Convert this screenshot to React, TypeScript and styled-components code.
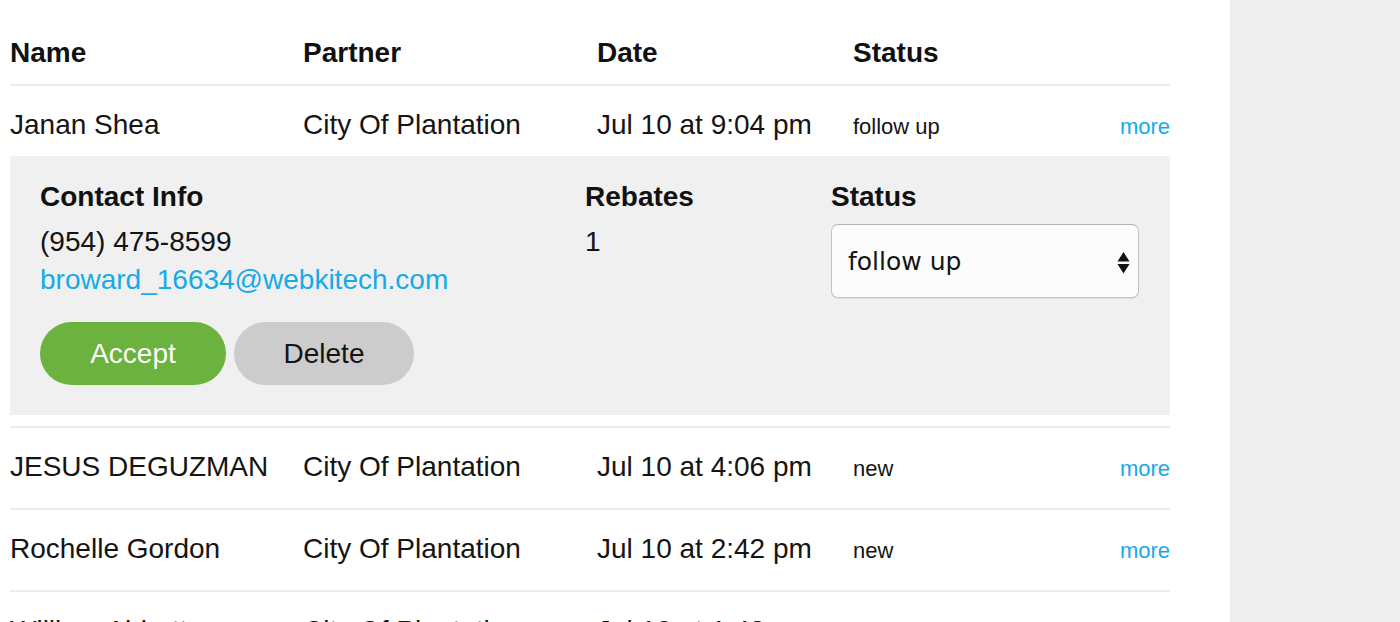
import React from 'react'
import styled, { createGlobalStyle } from 'styled-components'

const GlobalStyle = createGlobalStyle`
  html, body {
    margin: 0;
    padding: 0;
    background: #ffffff;
    overflow: hidden;
  }
  body {
    font-family: "Liberation Sans", Arial, Helvetica, sans-serif;
    color: #141414;
  }
`

const Page = styled.div`
  display: flex;
  height: 100vh;
  overflow: hidden;
`

const Main = styled.div`
  width: 1160px;
  padding: 0 60px 0 10px;
  flex-shrink: 0;
`

const Sidebar = styled.aside`
  flex: 1;
  background: #eeeeee;
`

const columns = '293px 294px 256px 1fr auto'

const HeaderRow = styled.div`
  display: grid;
  grid-template-columns: ${columns};
  align-items: center;
  padding: 37px 0 15px;
  line-height: 32px;
  border-bottom: 2px solid #ededed;
  font-size: 28px;
  font-weight: 700;
  color: #111111;
`

const Row = styled.div<{ $open?: boolean }>`
  display: grid;
  grid-template-columns: ${columns};
  align-items: center;
  height: ${(p) => (p.$open ? '70px' : '82px')};
  padding: ${(p) => (p.$open ? '8px 0 0' : '0 0 3px')};
  box-sizing: border-box;
  border-bottom: ${(p) => (p.$open ? 'none' : '2px solid #ededed')};
  font-size: 28px;
  line-height: 32px;
  white-space: nowrap;
`

const Cell = styled.div``

const StatusCell = styled.div`
  font-size: 22px;
  padding-top: 4px;
`

const MoreLink = styled.a`
  font-size: 22px;
  color: #15abe8;
  text-decoration: none;
  padding-top: 4px;
  cursor: pointer;
`

const OpenBlock = styled.div`
  padding-bottom: 11px;
  border-bottom: 2px solid #ededed;
`

const Details = styled.div`
  display: grid;
  grid-template-columns: 545px 246px 308px;
  background: #f0f0f0;
  padding: 25px 31px 30px 30px;
`

const DetailCol = styled.div`
  display: flex;
  flex-direction: column;
`

const DetailTitle = styled.div`
  font-size: 28px;
  font-weight: 700;
  line-height: 32px;
  margin-bottom: 10px;
  color: #111111;
`

const DetailLine = styled.div<{ $link?: boolean }>`
  font-size: 28px;
  line-height: 38px;
  color: ${(p) => (p.$link ? '#15abe8' : '#141414')};
`

const Buttons = styled.div`
  display: flex;
  gap: 8px;
  margin-top: 23px;
`

const PillButton = styled.button<{ $variant: 'accept' | 'delete' }>`
  height: 63px;
  width: ${(p) => (p.$variant === 'accept' ? '186px' : '180px')};
  border: none;
  border-radius: 32px;
  font-family: "Liberation Sans", Arial, sans-serif;
  font-size: 28px;
  background: ${(p) => (p.$variant === 'accept' ? '#6bb23e' : '#cccccc')};
  color: ${(p) => (p.$variant === 'accept' ? '#ffffff' : '#141414')};
  cursor: pointer;
`

const SelectWrap = styled.div`
  position: relative;
  width: 308px;
  height: 74px;
  margin-top: 1px;
`

const Select = styled.select`
  appearance: none;
  -webkit-appearance: none;
  width: 100%;
  height: 100%;
  box-sizing: border-box;
  border: 1px solid #c2c2c2;
  border-top-color: #b4b4b4;
  border-radius: 7px;
  background: #fcfcfc;
  padding: 0 40px 0 16px;
  font-family: "DejaVu Sans", Verdana, sans-serif;
  font-size: 25px;
  color: #141414;
  box-shadow: 0 1px 1px rgba(0, 0, 0, 0.06);
`

const Arrows = styled.svg`
  position: absolute;
  right: 9px;
  top: 28px;
  pointer-events: none;
`

type Lead = {
  name: string
  partner: string
  date: string
  status: string
}

const leads: Lead[] = [
  { name: 'Janan Shea', partner: 'City Of Plantation', date: 'Jul 10 at 9:04 pm', status: 'follow up' },
  { name: 'JESUS DEGUZMAN', partner: 'City Of Plantation', date: 'Jul 10 at 4:06 pm', status: 'new' },
  { name: 'Rochelle Gordon', partner: 'City Of Plantation', date: 'Jul 10 at 2:42 pm', status: 'new' },
  { name: 'William Abbott', partner: 'City Of Plantation', date: 'Jul 10 at 1:43 pm', status: 'new' },
]

const LeadRow: React.FC<{ lead: Lead; open?: boolean }> = ({ lead, open }) => (
  <Row $open={open}>
    <Cell>{lead.name}</Cell>
    <Cell>{lead.partner}</Cell>
    <Cell>{lead.date}</Cell>
    <StatusCell>{lead.status}</StatusCell>
    <MoreLink>more</MoreLink>
  </Row>
)

const App: React.FC = () => {
  const [first, ...rest] = leads

  return (
    <>
      <GlobalStyle />
      <Page>
        <Main>
          <HeaderRow>
            <Cell>Name</Cell>
            <Cell>Partner</Cell>
            <Cell>Date</Cell>
            <Cell>Status</Cell>
            <Cell />
          </HeaderRow>

          <OpenBlock>
            <LeadRow lead={first} open />
            <Details>
              <DetailCol>
                <DetailTitle>Contact Info</DetailTitle>
                <DetailLine>(954) 475-8599</DetailLine>
                <DetailLine $link>broward_16634@webkitech.com</DetailLine>
                <Buttons>
                  <PillButton $variant="accept">Accept</PillButton>
                  <PillButton $variant="delete">Delete</PillButton>
                </Buttons>
              </DetailCol>
              <DetailCol>
                <DetailTitle>Rebates</DetailTitle>
                <DetailLine>1</DetailLine>
              </DetailCol>
              <DetailCol>
                <DetailTitle>Status</DetailTitle>
                <SelectWrap>
                  <Select defaultValue="follow up">
                    <option value="new">new</option>
                    <option value="follow up">follow up</option>
                    <option value="accepted">accepted</option>
                  </Select>
                  <Arrows width="13" height="22" viewBox="0 0 13 22">
                    <polygon points="6.5,0 12.5,9.5 0.5,9.5" fill="#111" />
                    <polygon points="0.5,12 12.5,12 6.5,21.5" fill="#111" />
                  </Arrows>
                </SelectWrap>
              </DetailCol>
            </Details>
          </OpenBlock>

          {rest.map((lead) => (
            <LeadRow key={lead.name} lead={lead} />
          ))}
        </Main>
        <Sidebar />
      </Page>
    </>
  )
}

export default App
